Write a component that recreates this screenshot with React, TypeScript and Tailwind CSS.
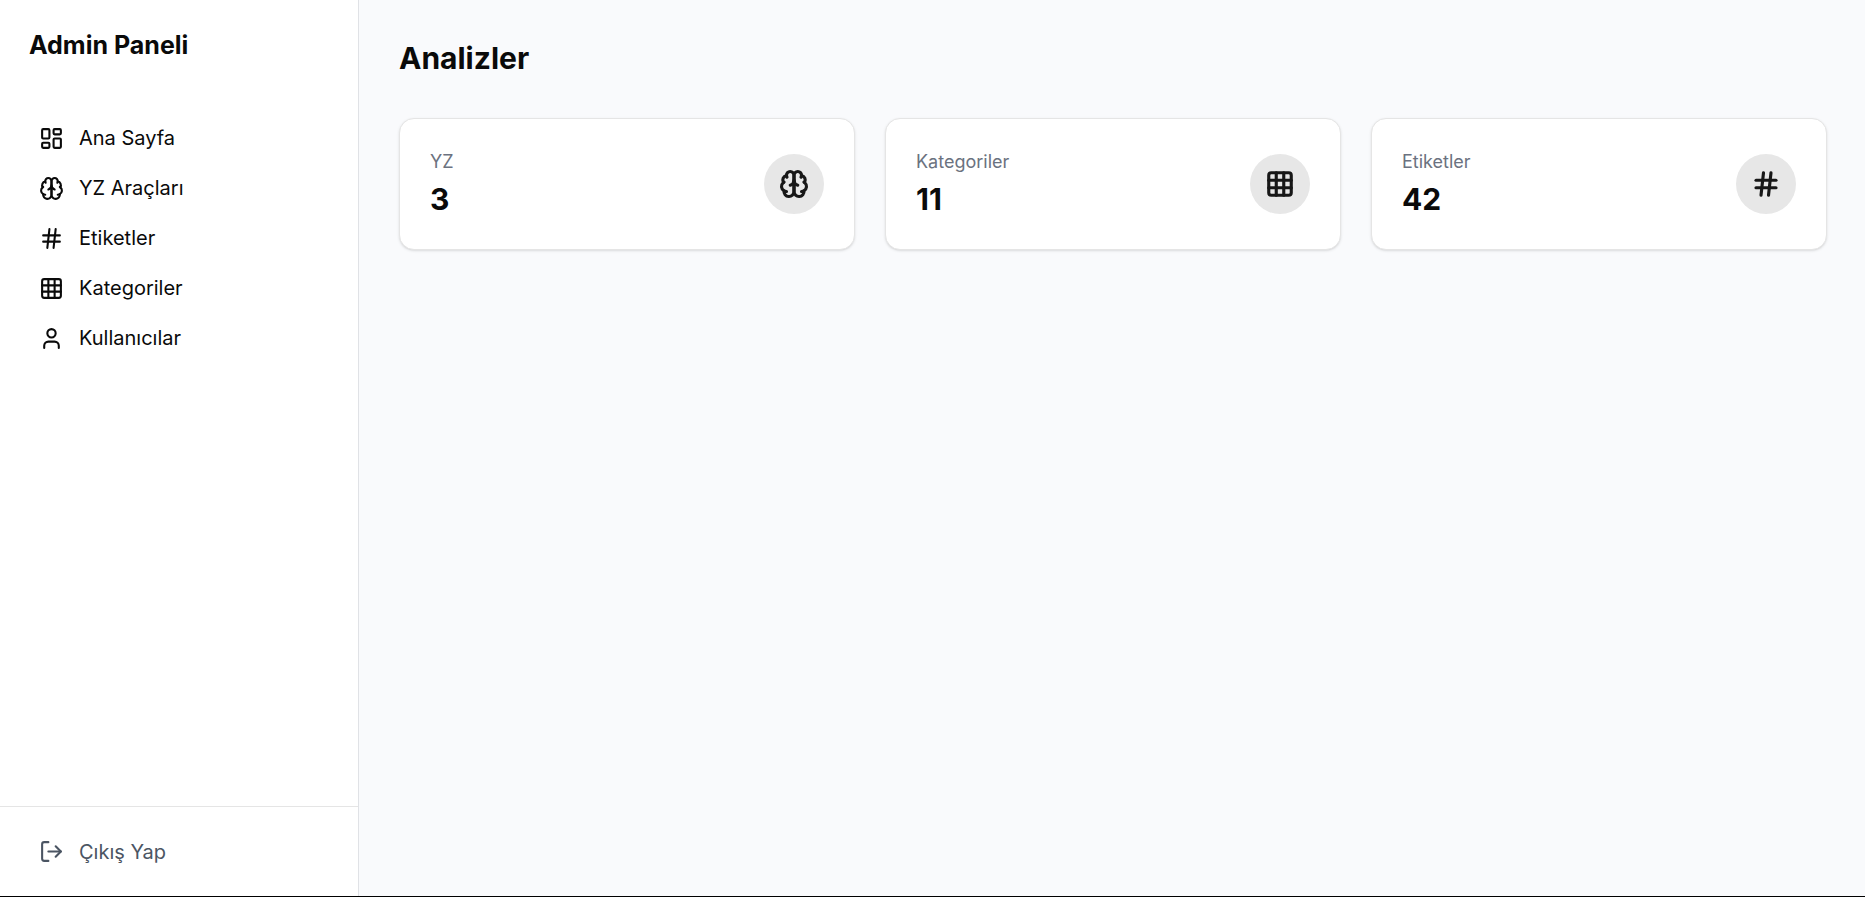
import type { ComponentType } from "react";
import { Grid3x3, Hash, LayoutDashboard, LogOut, User } from "lucide-react";

type IconProps = { className?: string; strokeWidth?: number };
type IconType = ComponentType<IconProps>;

function Brain({ className, strokeWidth = 2 }: IconProps) {
  return (
    <svg
      viewBox="0 0 24 24"
      fill="none"
      stroke="currentColor"
      strokeWidth={strokeWidth}
      strokeLinecap="round"
      strokeLinejoin="round"
      className={className}
      aria-hidden="true"
    >
      <path d="M12 5a3 3 0 1 0-5.997.125 4 4 0 0 0-2.526 5.77 4 4 0 0 0 .556 6.588A4 4 0 1 0 12 18Z" />
      <path d="M12 5a3 3 0 1 1 5.997.125 4 4 0 0 1 2.526 5.77 4 4 0 0 1-.556 6.588A4 4 0 1 1 12 18Z" />
      <path d="M15 13a4.5 4.5 0 0 1-3-4 4.5 4.5 0 0 1-3 4" />
      <path d="M17.599 6.5a3 3 0 0 0 .399-1.375" />
      <path d="M6.003 5.125A3 3 0 0 0 6.401 6.5" />
      <path d="M3.477 10.896a4 4 0 0 1 .585-.396" />
      <path d="M19.938 10.5a4 4 0 0 1 .585.396" />
      <path d="M6 18a4 4 0 0 1-1.967-.516" />
      <path d="M19.967 17.484A4 4 0 0 1 18 18" />
    </svg>
  );
}

const navItems: { label: string; href: string; icon: IconType }[] = [
  { label: "Ana Sayfa", href: "#ana-sayfa", icon: LayoutDashboard },
  { label: "YZ Araçları", href: "#yz-araclari", icon: Brain },
  { label: "Etiketler", href: "#etiketler", icon: Hash },
  { label: "Kategoriler", href: "#kategoriler", icon: Grid3x3 },
  { label: "Kullanıcılar", href: "#kullanicilar", icon: User },
];

const stats: { label: string; value: number; icon: IconType }[] = [
  { label: "YZ", value: 3, icon: Brain },
  { label: "Kategoriler", value: 11, icon: Grid3x3 },
  { label: "Etiketler", value: 42, icon: Hash },
];

function Sidebar() {
  return (
    <aside className="flex w-[359px] shrink-0 flex-col border-r border-[#e0e2e6] bg-white">
      <div className="px-[29px] pt-[30px]">
        <h2 className="text-[25px] leading-[30px] font-bold">Admin Paneli</h2>
      </div>
      <nav className="flex-1 px-[19px] pt-[53px]">
        <ul>
          {navItems.map(({ label, href, icon: Icon }) => (
            <li key={label}>
              <a href={href} className="flex h-[50px] items-center gap-[15px] px-5 text-[20px] leading-[30px]">
                <Icon className="size-[25px]" />
                {label}
              </a>
            </li>
          ))}
        </ul>
      </nav>
      <div className="border-t border-[#e5e5e5] px-[19px] py-5">
        <button
          type="button"
          className="flex h-[49px] w-full items-center gap-[15px] px-5 text-left text-[20px] leading-[30px] text-[#4b5563]"
        >
          <LogOut className="size-[25px]" />
          Çıkış Yap
        </button>
      </div>
    </aside>
  );
}

function StatCard({ label, value, icon: Icon }: { label: string; value: number; icon: IconType }) {
  return (
    <section className="flex items-center justify-between rounded-[15px] border border-[#e5e5e5] bg-white p-[30px] shadow-[0_1px_3px_rgb(0_0_0/0.1),0_1px_2px_-1px_rgb(0_0_0/0.1)]">
      <div>
        <p className="text-[18px] leading-[26px] text-[#6b7280]">{label}</p>
        <p className="mt-1 text-[30px] leading-10 font-bold">{value}</p>
      </div>
      <div className="rounded-full bg-[#e7e7e7] p-[15px] text-[#171717]">
        <Icon className="size-[30px]" strokeWidth={2.5} />
      </div>
    </section>
  );
}

export default function App() {
  return (
    <div className="flex min-h-screen border-b border-black bg-[#f9fafc] font-[Inter,sans-serif] text-[#0a0a0a]">
      <Sidebar />
      <main className="min-w-0 flex-1 px-10 pt-10 pr-[38px]">
        <h1 className="text-[30px] leading-9 font-bold">Analizler</h1>
        <div className="mt-[42px] grid grid-cols-3 gap-[30px]">
          {stats.map((stat) => (
            <StatCard key={stat.label} {...stat} />
          ))}
        </div>
      </main>
    </div>
  );
}
